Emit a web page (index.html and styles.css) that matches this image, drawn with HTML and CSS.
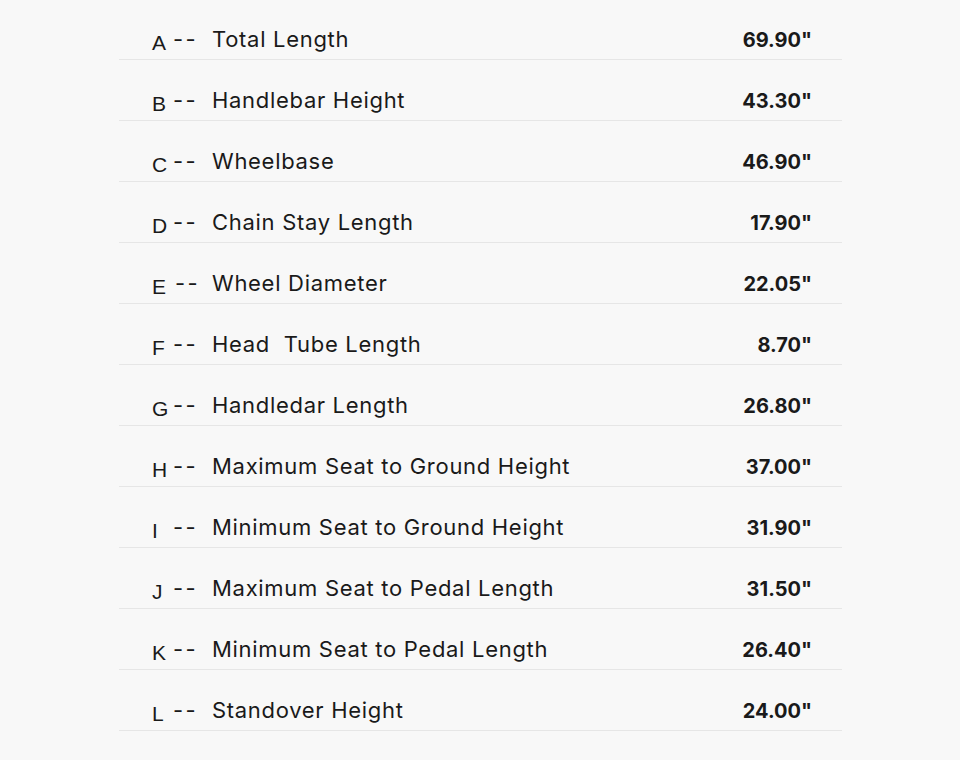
FILE: index.html
```html
<!DOCTYPE html>
<html>
<head>
<meta charset="utf-8">
<link rel="stylesheet" href="styles.css">
</head>
<body>
<div class="table">
  <div class="row"><span class="key">A</span><span class="dash">--</span><span class="label">Total Length</span><span class="value">69.90"</span></div>
  <div class="row"><span class="key">B</span><span class="dash">--</span><span class="label">Handlebar Height</span><span class="value">43.30"</span></div>
  <div class="row"><span class="key">C</span><span class="dash">--</span><span class="label">Wheelbase</span><span class="value">46.90"</span></div>
  <div class="row"><span class="key">D</span><span class="dash">--</span><span class="label">Chain Stay Length</span><span class="value">17.90"</span></div>
  <div class="row"><span class="key">E</span><span class="dash shift">--</span><span class="label">Wheel Diameter</span><span class="value">22.05"</span></div>
  <div class="row"><span class="key">F</span><span class="dash">--</span><span class="label">Head&nbsp; Tube Length</span><span class="value">8.70"</span></div>
  <div class="row"><span class="key">G</span><span class="dash">--</span><span class="label">Handledar Length</span><span class="value">26.80"</span></div>
  <div class="row"><span class="key">H</span><span class="dash">--</span><span class="label">Maximum Seat to Ground Height</span><span class="value">37.00"</span></div>
  <div class="row"><span class="key">I</span><span class="dash">--</span><span class="label">Minimum Seat to Ground Height</span><span class="value">31.90"</span></div>
  <div class="row"><span class="key">J</span><span class="dash">--</span><span class="label">Maximum Seat to Pedal Length</span><span class="value">31.50"</span></div>
  <div class="row"><span class="key">K</span><span class="dash">--</span><span class="label">Minimum Seat to Pedal Length</span><span class="value">26.40"</span></div>
  <div class="row"><span class="key">L</span><span class="dash">--</span><span class="label">Standover Height</span><span class="value">24.00"</span></div>
</div>
</body>
</html>
```
FILE: styles.css
```css
html, body {
  margin: 0;
  padding: 0;
  background: #f8f8f8;
}
body {
  height: 760px;
  overflow: hidden;
  color: #1a1a1a;
  font-family: Inter, "Open Sans", sans-serif;
}
.table {
  width: 723px;
  margin: -1px 0 0 119px;
}
.row {
  display: flex;
  align-items: baseline;
  height: 60px;
  box-sizing: content-box;
  border-bottom: 1px solid #e6e6e6;
  padding-left: 33px;
  padding-right: 30px;
}
.key {
  width: 21px;
  font-family: "Liberation Sans", Arial, sans-serif;
  font-size: 21px;
  line-height: 1;
  position: relative;
  top: 3px;
  padding-top: 30px;
}
.dash {
  width: 39px;
  font-size: 22px;
  letter-spacing: 2.5px;
}
.dash.shift {
  margin-left: 2px;
  width: 37px;
}
.label {
  flex: 1;
  font-size: 22px;
  font-weight: 400;
  letter-spacing: 0.7px;
}
.value {
  font-size: 20px;
  font-weight: 700;
  letter-spacing: 0;
}
```
